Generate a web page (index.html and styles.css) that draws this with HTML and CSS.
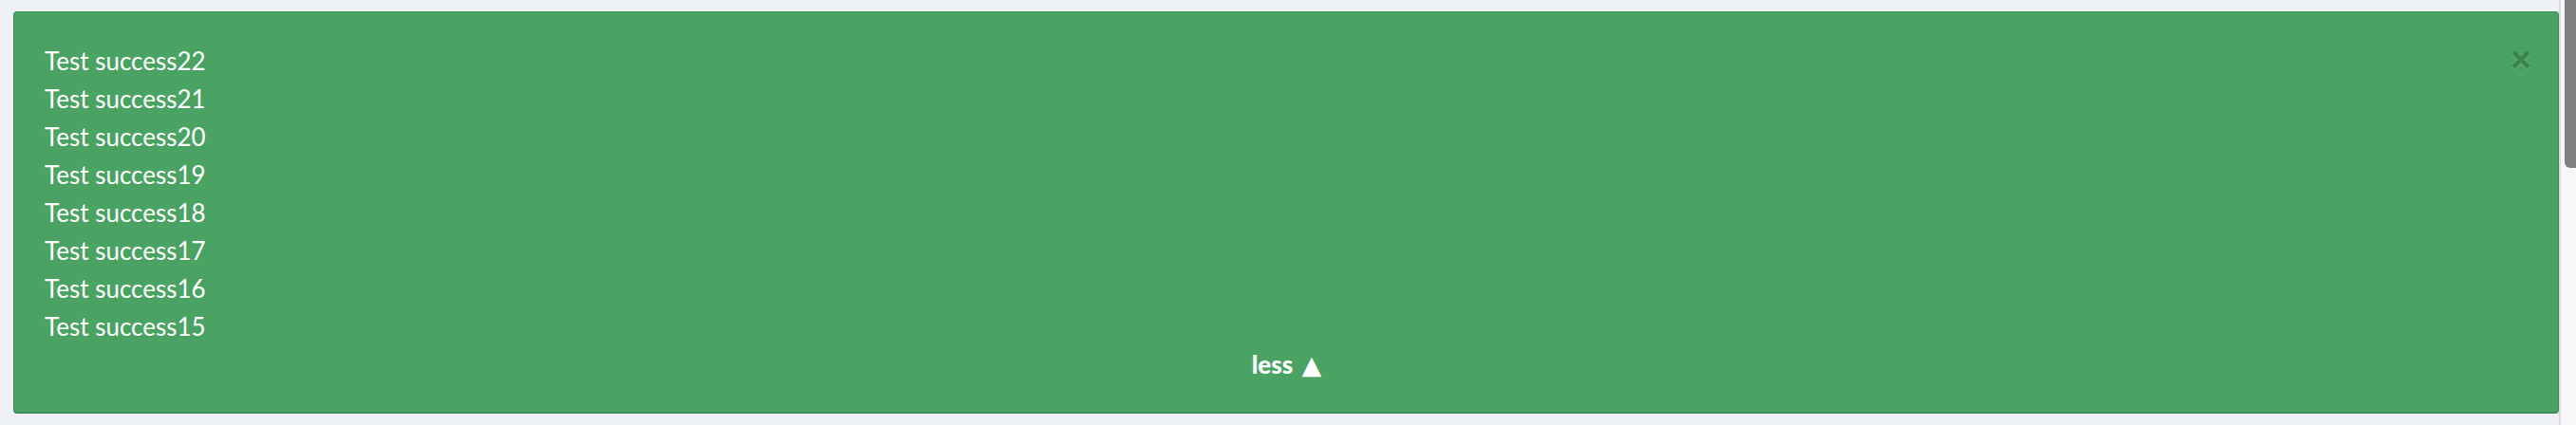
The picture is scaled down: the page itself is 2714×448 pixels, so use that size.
FILE: index.html
```html
<!DOCTYPE html>
<html>
<head>
<meta charset="utf-8">
<link rel="stylesheet" href="styles.css">
</head>
<body>
<div class="page">
  <main class="content">
    <div class="alert">
      <button class="close" type="button" aria-label="Close">
        <svg width="20" height="21" viewBox="0 0 20 21">
          <g class="shadow" transform="translate(0 1)"><path d="M2 2 L18 18 M18 2 L2 18"/></g>
          <g class="mark"><path d="M2 2 L18 18 M18 2 L2 18"/></g>
        </svg>
      </button>
      <ul class="messages">
        <li>Test success22</li>
        <li>Test success21</li>
        <li>Test success20</li>
        <li>Test success19</li>
        <li>Test success18</li>
        <li>Test success17</li>
        <li>Test success16</li>
        <li>Test success15</li>
      </ul>
      <div class="toggle">less <span class="arrow">▲</span></div>
    </div>
  </main>
  <div class="scrollbar"><div class="thumb"></div></div>
</div>
</body>
</html>
```
FILE: styles.css
```css
html, body {
  margin: 0;
  height: 100%;
  overflow: hidden;
}
body {
  background: #eef1f6;
  font-family: Lato, "Liberation Sans", sans-serif;
}
.page {
  display: flex;
  height: 100%;
}
.content {
  flex: 1;
  padding: 12px 0 0 14px;
}
.scrollbar {
  width: 16px;
  background: #f7f7f7;
  border-left: 2px solid #d9dcdf;
  display: flex;
  flex-direction: column;
}
.thumb {
  height: 177px;
  margin-left: 4px;
  background: #808080;
  border-radius: 0 0 0 6px;
}
.alert {
  position: relative;
  background: #4aa363;
  border: 1px solid #3e8c53;
  border-bottom-width: 2px;
  border-radius: 4px;
  padding: 31px 31px 29px 32px;
  color: #ffffff;
  font-size: 26px;
  line-height: 40px;
}
.messages {
  list-style: none;
  margin: 0;
  padding: 0;
}
.toggle {
  text-align: center;
  font-weight: 900;
}
.arrow {
  font-family: "DejaVu Sans", sans-serif;
  font-size: 27px;
  font-weight: normal;
  margin-left: 3px;
}
.close {
  position: absolute;
  top: 40px;
  right: 29px;
  background: none;
  border: 0;
  padding: 0;
  display: flex;
  cursor: pointer;
}
.close path {
  fill: none;
  stroke-width: 4.5;
}
.close .mark path {
  stroke: #3b824f;
}
.close .shadow path {
  stroke: #6db581;
}
```
